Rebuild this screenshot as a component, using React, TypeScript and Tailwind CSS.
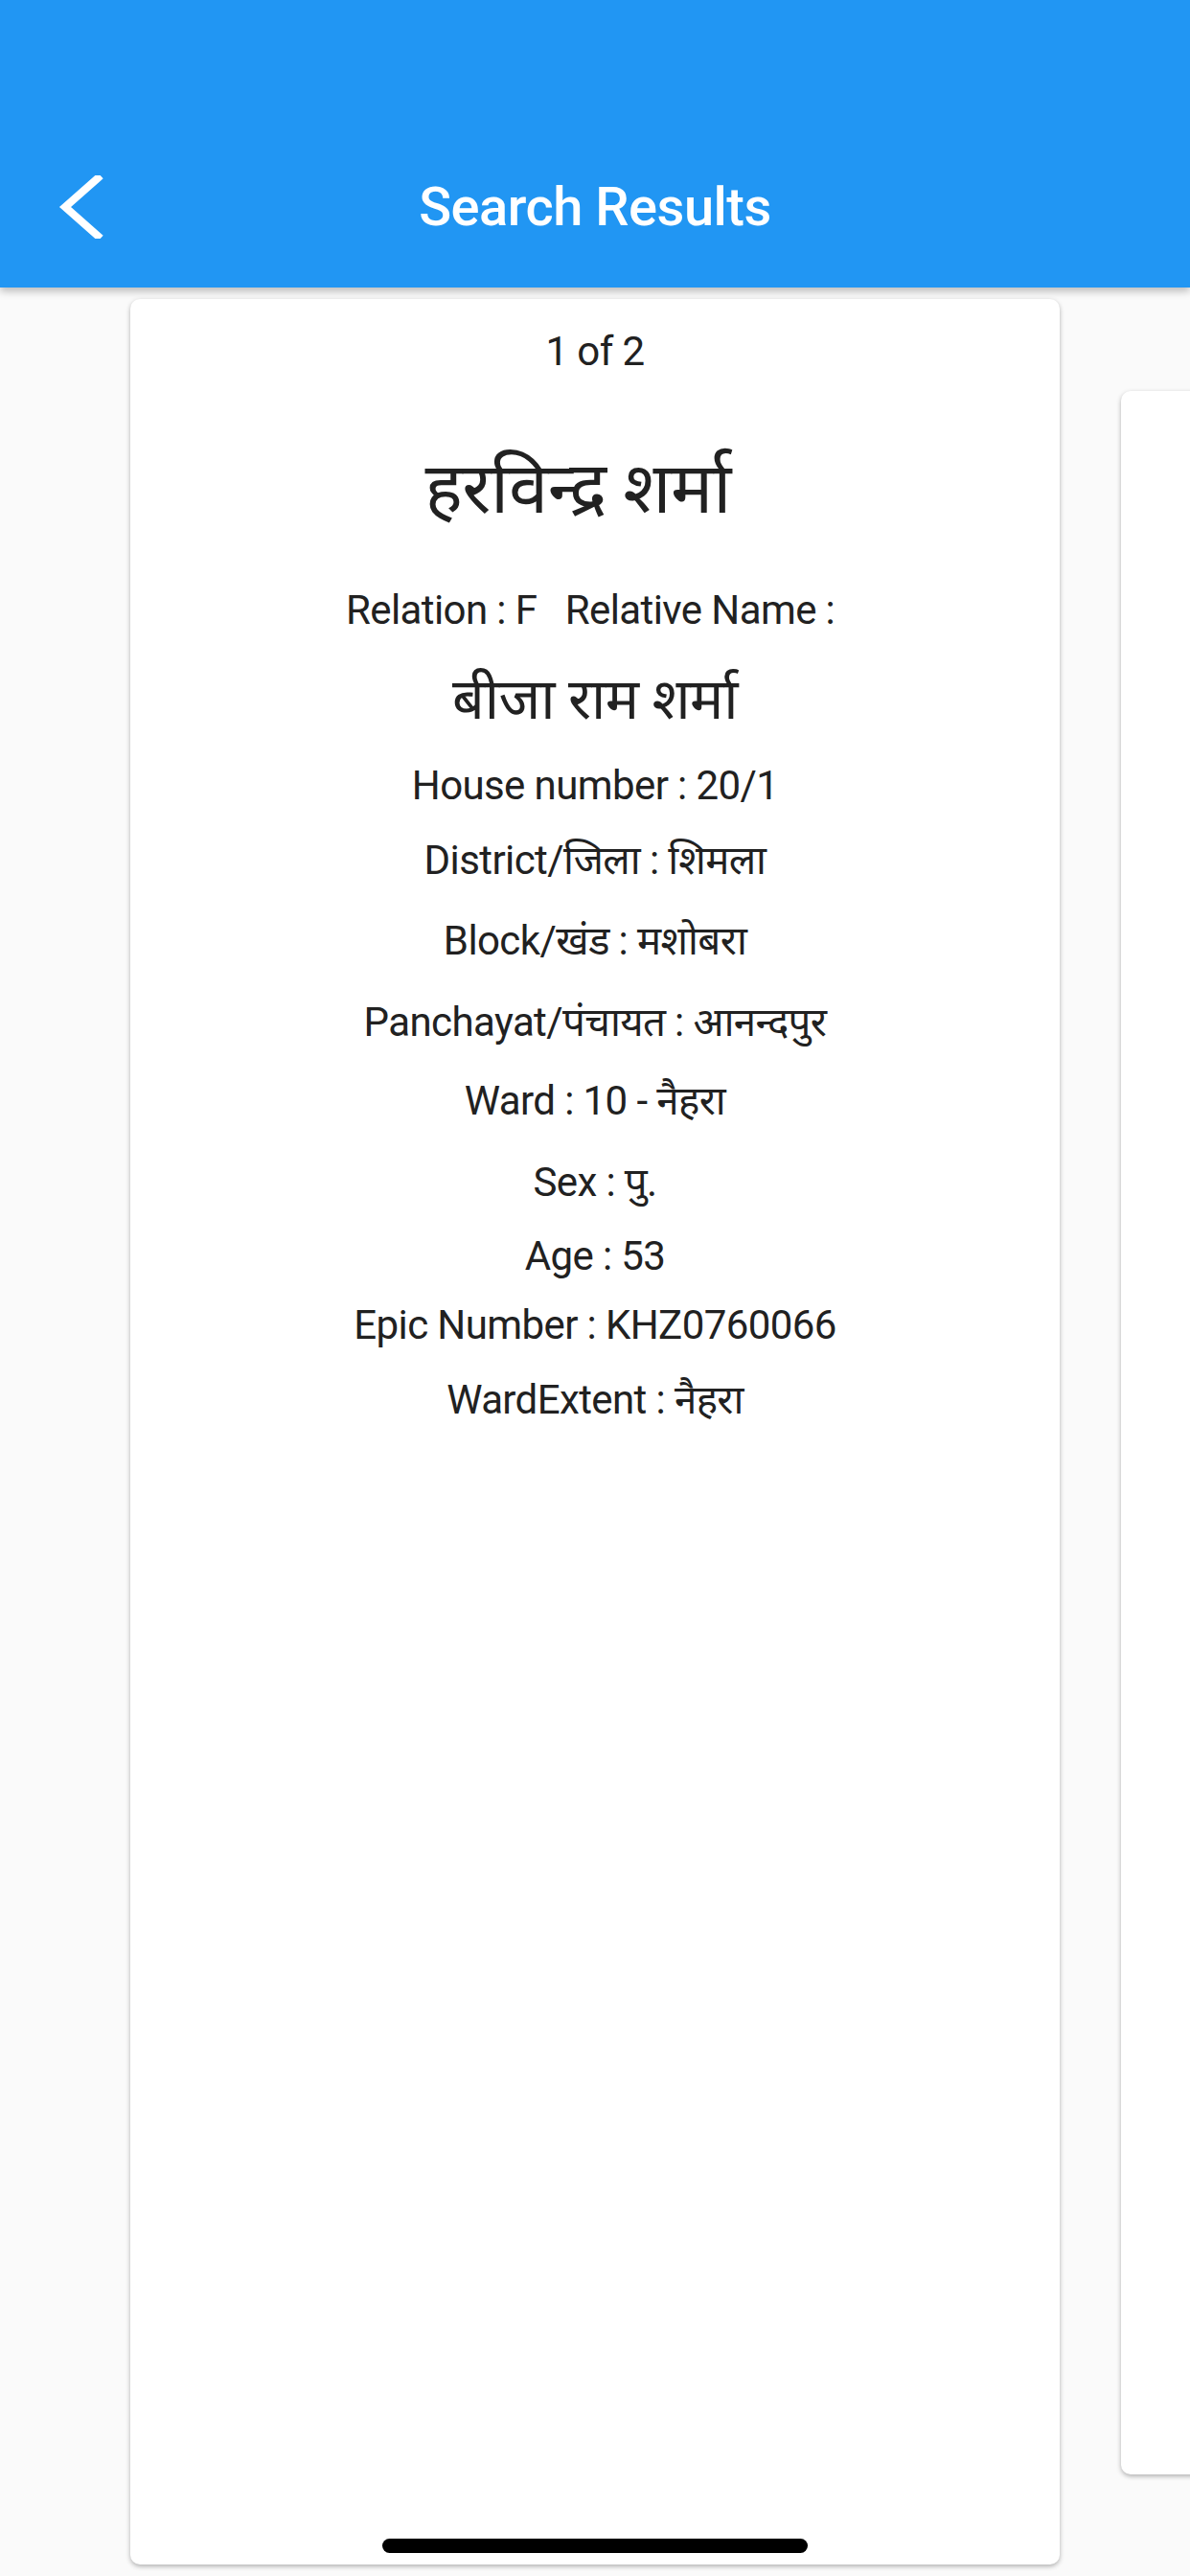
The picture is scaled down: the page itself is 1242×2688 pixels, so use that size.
const rows: { text: string; mt: string; size: string; lh: string }[] = [
  { text: '1 of 2', mt: 'mt-[25px]', size: 'text-[42px]', lh: 'leading-[60px]' },
  { text: 'हरविन्द्र शर्मा\u00a0\u00a0', mt: 'mt-[73px]', size: 'text-[74px]', lh: 'leading-[80px]' },
  { text: 'Relation : F\u00a0\u00a0 Relative Name :\u00a0', mt: 'mt-[57px]', size: 'text-[42px]', lh: 'leading-[60px]' },
  { text: 'बीजा राम शर्मा', mt: 'mt-[28px]', size: 'text-[59px]', lh: 'leading-[70px]' },
  { text: 'House number : 20/1', mt: 'mt-[25px]', size: 'text-[42px]', lh: 'leading-[60px]' },
  { text: 'District/जिला : शिमला', mt: 'mt-[18px]', size: 'text-[42px]', lh: 'leading-[60px]' },
  { text: 'Block/खंड : मशोबरा', mt: 'mt-[24px]', size: 'text-[42px]', lh: 'leading-[60px]' },
  { text: 'Panchayat/पंचायत : आनन्दपुर', mt: 'mt-[25px]', size: 'text-[42px]', lh: 'leading-[60px]' },
  { text: 'Ward : 10 - नैहरा', mt: 'mt-[22px]', size: 'text-[42px]', lh: 'leading-[60px]' },
  { text: 'Sex : पु.', mt: 'mt-[25px]', size: 'text-[42px]', lh: 'leading-[60px]' },
  { text: 'Age : 53', mt: 'mt-[17px]', size: 'text-[42px]', lh: 'leading-[60px]' },
  { text: 'Epic Number : KHZ0760066', mt: 'mt-[12px]', size: 'text-[42px]', lh: 'leading-[60px]' },
  { text: 'WardExtent : नैहरा', mt: 'mt-[18px]', size: 'text-[42px]', lh: 'leading-[60px]' },
];

export default function App() {
  return (
    <div className="relative w-[1242px] h-[2688px] overflow-hidden bg-[#fafafa] font-['Roboto','Noto_Sans','Noto_Sans_Devanagari',sans-serif]">
      {/* App bar */}
      <div className="relative z-10 h-[300px] bg-[#2196f3] pt-[132px] shadow-[0_4px_8px_rgba(0,0,0,0.25)]">
        <div className="relative flex h-[168px] items-center justify-center">
          <svg
            className="absolute left-[60px] top-[50%] -translate-y-1/2"
            width="50"
            height="66"
            viewBox="0 0 50 66"
            fill="none"
          >
            <polyline points="42,3 8,33 42,63" stroke="#fff" strokeWidth="8" strokeLinecap="square" />
          </svg>
          <h1 className="text-[56px] font-medium tracking-[-0.5px] text-white">Search Results</h1>
        </div>
      </div>

      {/* Cards */}
      <div className="flex items-start">
        <div className="ml-[136px] mt-[12px] h-[2364px] w-[970px] shrink-0 rounded-[10px] bg-white text-center tracking-[-0.6px] text-[#212121] shadow-[0_2px_5px_rgba(0,0,0,0.3)]">
          {rows.map((r, i) => (
            <div key={i} className={`${r.mt} ${r.size} ${r.lh} whitespace-pre`}>
              {r.text}
            </div>
          ))}
        </div>
        <div className="ml-[64px] mt-[108px] h-[2174px] w-[970px] shrink-0 rounded-[10px] bg-white shadow-[0_2px_5px_rgba(0,0,0,0.3)]" />
      </div>

      {/* Home indicator */}
      <div className="absolute left-[399px] top-[2649px] h-[15px] w-[444px] rounded-full bg-black" />
    </div>
  );
}
